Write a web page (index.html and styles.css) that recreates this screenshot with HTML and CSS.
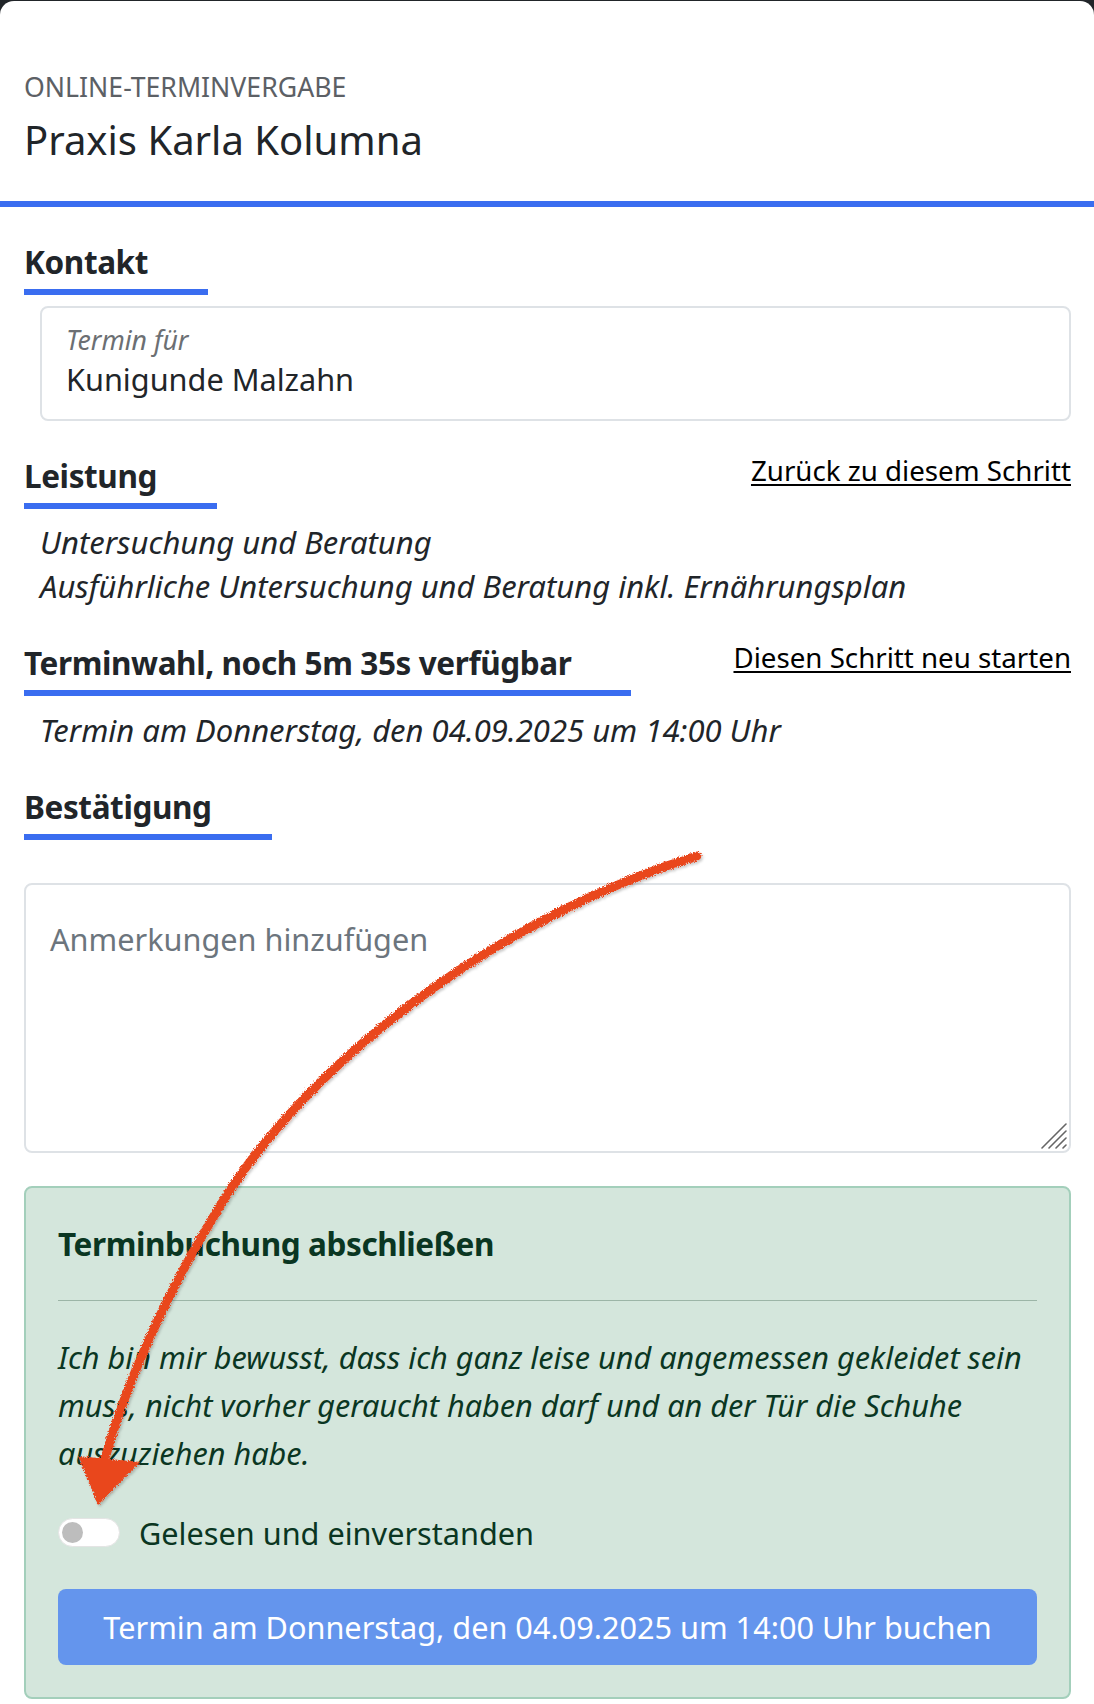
FILE: index.html
```html
<!DOCTYPE html>
<html lang="de">
<head>
<meta charset="utf-8">
<title>Online-Terminvergabe – Praxis Karla Kolumna</title>
<link rel="stylesheet" href="styles.css">
</head>
<body>
<div class="page">
  <header class="head">
    <div class="eyebrow">ONLINE-TERMINVERGABE</div>
    <h1 class="title">Praxis Karla Kolumna</h1>
  </header>
  <main class="content">
    <section class="step">
      <div class="step-head"><h2 class="step-title">Kontakt</h2></div>
      <div class="contact-box">
        <div class="label">Termin für</div>
        <div class="value">Kunigunde Malzahn</div>
      </div>
    </section>
    <section class="step">
      <div class="step-head">
        <h2 class="step-title">Leistung</h2>
        <a class="step-link" href="#">Zurück zu diesem Schritt</a>
      </div>
      <div class="step-body">
        <div>Untersuchung und Beratung</div>
        <div>Ausführliche Untersuchung und Beratung inkl. Ernährungsplan</div>
      </div>
    </section>
    <section class="step">
      <div class="step-head">
        <h2 class="step-title">Terminwahl, noch 5m 35s verfügbar</h2>
        <a class="step-link" href="#">Diesen Schritt neu starten</a>
      </div>
      <div class="step-body">
        <div>Termin am Donnerstag, den 04.09.2025 um 14:00 Uhr</div>
      </div>
    </section>
    <section class="step">
      <div class="step-head"><h2 class="step-title">Bestätigung</h2></div>
      <div class="notes">
        <textarea class="notes-input" placeholder="Anmerkungen hinzufügen"></textarea>
        <svg class="grip" width="26" height="26" viewBox="0 0 26 26" aria-hidden="true">
          <path d="M1 25 L25 1 M8 25 L25 8 M15 25 L25 15 M22 25 L25 22" stroke="#666" stroke-width="1.6" stroke-linecap="round" fill="none"/>
        </svg>
      </div>
      <div class="confirm">
        <h3 class="confirm-title">Terminbuchung abschließen</h3>
        <hr class="confirm-rule">
        <p class="confirm-text">Ich bin mir bewusst, dass ich ganz leise und angemessen gekleidet sein muss, nicht vorher geraucht haben darf und an der Tür die Schuhe auszuziehen habe.</p>
        <label class="agree">
          <span class="switch"><span class="knob"></span></span>
          <span>Gelesen und einverstanden</span>
        </label>
        <button class="book" type="button">Termin am Donnerstag, den 04.09.2025 um 14:00 Uhr buchen</button>
      </div>
    </section>
  </main>
</div>
<svg class="annotation" width="1094" height="1704" viewBox="0 0 1094 1704" aria-hidden="true">
  <defs>
    <filter id="crayon" x="-10%" y="-10%" width="120%" height="120%">
      <feTurbulence type="fractalNoise" baseFrequency="0.9" numOctaves="2" seed="3" result="noise"/>
      <feDisplacementMap in="SourceGraphic" in2="noise" scale="5" xChannelSelector="R" yChannelSelector="G" result="rough"/>
      <feDropShadow dx="1.5" dy="2" stdDeviation="1.2" flood-color="#000" flood-opacity="0.2"/>
    </filter>
  </defs>
  <g filter="url(#crayon)">
    <path d="M697 856 C520 910 330 1040 230 1190 C160 1300 120 1400 102 1470" fill="none" stroke="#e9461f" stroke-width="9" stroke-linecap="round"/>
    <polygon points="78,1456 140,1462 98,1505" fill="#e9461f"/>
  </g>
</svg>
</body>
</html>
```

FILE: styles.css
```css
html, body {
  margin: 0;
}

body {
  position: relative;
  padding-top: 1px;
  background: #212529;
  font-family: "Noto Sans", "Open Sans", sans-serif;
  color: #212529;
}

.page {
  background: #fff;
  border-radius: 14px 14px 0 0;
  min-height: 1703px;
}

.head {
  padding: 66px 24px 37.5px;
  border-bottom: 6px solid #3a6df0;
}

.eyebrow {
  font-size: 26.67px;
  line-height: 40px;
  color: #5c6065;
}

.title {
  margin: 8.5px 0 0;
  font-size: 40px;
  line-height: 48px;
  font-weight: 400;
}

.content {
  padding: 0 23px 0 24px;
}

.step {
  margin-top: 29px;
}

.step-head {
  display: flex;
  justify-content: space-between;
  align-items: flex-start;
}

.step-title {
  margin: 0;
  font-size: 31.5px;
  line-height: 50px;
  font-weight: 700;
  letter-spacing: -0.4px;
  padding: 1px 60px 2px 0;
  border-bottom: 6px solid #3a6df0;
}

.step-link {
  font-size: 27.7px;
  line-height: 40px;
  color: #000;
  text-decoration: underline;
  text-underline-offset: 3px;
}

.contact-box {
  margin: 11px 0 0 16px;
  border: 2px solid #dee2e6;
  border-radius: 8px;
  padding: 17px 24px 19.5px;
}

.label {
  font-size: 26.67px;
  line-height: 30px;
  font-style: italic;
  color: #6c6f73;
}

.value {
  margin-top: 4px;
  font-size: 30.67px;
  line-height: 40px;
}

.step-body {
  margin-top: 11.5px;
  padding-left: 16px;
  font-size: 31px;
  line-height: 44px;
  font-style: italic;
}

.notes {
  position: relative;
  margin-top: 43px;
}

.notes-input {
  display: block;
  width: 100%;
  height: 270px;
  box-sizing: border-box;
  border: 2px solid #dee2e6;
  border-radius: 8px;
  padding: 30px 24px;
  font-family: "Noto Sans", sans-serif;
  font-size: 30.67px;
  line-height: 48px;
  color: #212529;
  resize: none;
  outline: none;
}

.notes-input::placeholder {
  color: #6c757d;
}

.grip {
  position: absolute;
  right: 4px;
  bottom: 4px;
}

.confirm {
  margin-top: 33px;
  background: #d4e6dc;
  border: 2px solid #a3cfbb;
  border-radius: 8px;
  padding: 32px;
  color: #0a3622;
}

.confirm-title {
  margin: 0;
  font-size: 31.5px;
  line-height: 48px;
  font-weight: 700;
  letter-spacing: -0.4px;
}

.confirm-rule {
  margin: 32px 0;
  border: 0;
  border-top: 1.5px solid rgba(10, 54, 34, 0.28);
}

.confirm-text {
  margin: 0;
  font-size: 30.67px;
  line-height: 48px;
  font-style: italic;
}

.agree {
  margin-top: 32px;
  display: flex;
  align-items: center;
  gap: 19px;
  font-size: 30.67px;
  line-height: 48px;
}

.switch {
  width: 62px;
  height: 29px;
  box-sizing: border-box;
  border-radius: 15px;
  background: #fff;
  border: 1px solid #e4e4e4;
  display: flex;
  align-items: center;
  padding-left: 3px;
}

.knob {
  width: 21px;
  height: 21px;
  border-radius: 50%;
  background: #bdbdbd;
}

.book {
  display: block;
  width: 100%;
  height: 76px;
  margin-top: 32px;
  border: 0;
  border-radius: 8px;
  background: #6495ed;
  color: #fff;
  font-family: "Noto Sans", sans-serif;
  font-size: 30.67px;
}

.annotation {
  position: absolute;
  top: 0;
  left: 0;
  pointer-events: none;
}
```
